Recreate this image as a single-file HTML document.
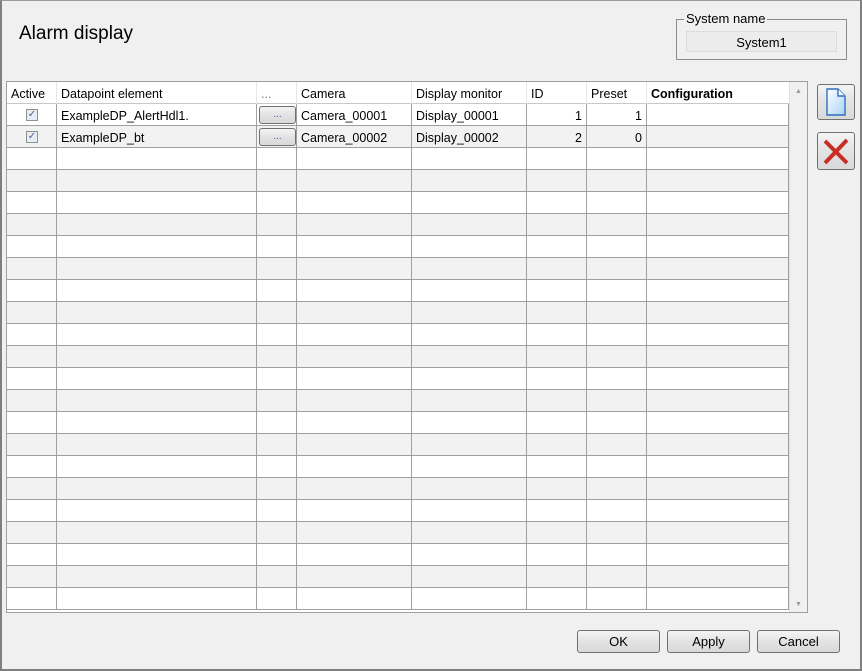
<!DOCTYPE html>
<html><head><style>
*{box-sizing:border-box;margin:0;padding:0}
body{width:862px;height:671px;background:#f0f0f0;font-family:"Liberation Sans",sans-serif;font-size:12px;color:#000;position:relative;overflow:hidden}
.frame{position:absolute;left:0;top:0;width:862px;height:671px;border:2px solid #7f7f7f;border-top:1px solid #9a9a9a}
.title{position:absolute;left:19px;top:23px;font-size:19px}
.gb{position:absolute;left:676px;top:19px;width:171px;height:41px;border:1px solid #8c8c8c}
.gbl{position:absolute;left:684px;top:11px;background:#f0f0f0;padding:0 2px;font-size:13px}
.sys{position:absolute;left:686px;top:31px;width:151px;height:21px;border:1px solid #dcdcdc;background:#ececec;text-align:center;line-height:21px;font-size:13px}
.tbl{position:absolute;left:6px;top:81px;width:802px;height:532px;border:1px solid #a0a0a0;background:#fff;overflow:hidden}
.row{position:absolute;left:0;width:782px;height:22px;border-bottom:1px solid #a0a0a0}
.c{position:absolute;top:0;height:22px;border-right:1px solid #a0a0a0;line-height:24px;padding:0 4px;white-space:nowrap;font-size:12.5px}
.hdr .c{border-right:1px solid #e6e6e6;font-size:12.5px}
.r{text-align:right}
.cb{position:absolute;left:19px;top:5px;width:12px;height:12px;border:1px solid #8f8f8f;background:#e8ecf4;font-size:10px;line-height:10px;text-align:center;color:#4b5f93}
.btn{position:absolute;border:1px solid #707070;border-radius:3px;background:linear-gradient(#f4f4f4,#e3e3e3 50%,#d9d9d9);text-align:center}
.dots{left:2px;top:2px;width:37px;height:18px;line-height:16px;color:#2a5fa8;font-size:10px}
.sb{position:absolute;right:0;top:0;width:18px;height:530px;background:#f0f0f0;border-left:1px solid #e0e0e0}
</style></head><body>
<div class="frame"></div>
<div class="title">Alarm display</div>
<div class="gb"></div><div class="gbl">System name</div>
<div class="sys">System1</div>
<div class="tbl">
<div class="sb"><div style="position:absolute;left:5px;top:6px;font-size:7px;color:#999">▲</div><div style="position:absolute;left:5px;bottom:4px;font-size:7px;color:#999">▼</div></div>
<div class="row hdr" style="top:0;height:22px;border-bottom:1px solid #c8c8c8">
<div class="c" style="left:0;width:50px">Active</div>
<div class="c" style="left:50px;width:200px">Datapoint element</div>
<div class="c" style="left:250px;width:40px;color:#777">...</div>
<div class="c" style="left:290px;width:115px">Camera</div>
<div class="c" style="left:405px;width:115px">Display monitor</div>
<div class="c" style="left:520px;width:60px">ID</div>
<div class="c" style="left:580px;width:60px">Preset</div>
<div class="c" style="left:640px;width:142px;font-weight:bold;border-right:none">Configuration</div>
</div>
<div id="rows"></div>
</div>
<div class="btn" style="left:817px;top:84px;width:38px;height:36px"><svg width="36" height="34" viewBox="0 0 36 34"><defs><linearGradient id="g" x1="0" y1="0" x2="1" y2="1"><stop offset="0" stop-color="#fff"/><stop offset="1" stop-color="#a9d3f5"/></linearGradient></defs><path d="M9 4h11l7 7v19H9z" fill="url(#g)" stroke="#2f6fc0" stroke-width="1.4"/><path d="M20 4v7h7" fill="#fff" stroke="#2f6fc0" stroke-width="1.4"/></svg></div>
<div class="btn" style="left:817px;top:132px;width:38px;height:38px"><svg width="36" height="36" viewBox="0 0 36 36"><path d="M7 8L29 30M29 7L7 30" stroke="#c72e25" stroke-width="4"/></svg></div>
<div class="btn" style="left:577px;top:630px;width:83px;height:23px;line-height:22px;font-size:13px">OK</div>
<div class="btn" style="left:667px;top:630px;width:83px;height:23px;line-height:22px;font-size:13px">Apply</div>
<div class="btn" style="left:757px;top:630px;width:83px;height:23px;line-height:22px;font-size:13px">Cancel</div>
<script>
var h='',data=[["ExampleDP_AlertHdl1.","Camera_00001","Display_00001","1","1"],["ExampleDP_bt","Camera_00002","Display_00002","2","0"]];
for(var i=0;i<23;i++){var t=22+i*22,bg=i%2?'#f2f2f2':'#fff',d=data[i];
h+='<div class="row" style="top:'+t+'px;background:'+bg+'">'+
'<div class="c" style="left:0;width:50px">'+(d?'<div class="cb">✓</div>':'')+'</div>'+
'<div class="c" style="left:50px;width:200px">'+(d?d[0]:'')+'</div>'+
'<div class="c" style="left:250px;width:40px">'+(d?'<div class="btn dots">...</div>':'')+'</div>'+
'<div class="c" style="left:290px;width:115px">'+(d?d[1]:'')+'</div>'+
'<div class="c" style="left:405px;width:115px">'+(d?d[2]:'')+'</div>'+
'<div class="c r" style="left:520px;width:60px">'+(d?d[3]:'')+'</div>'+
'<div class="c r" style="left:580px;width:60px">'+(d?d[4]:'')+'</div>'+
'<div class="c" style="left:640px;width:142px"></div></div>';}
document.getElementById('rows').innerHTML=h;
</script>
</body></html>
